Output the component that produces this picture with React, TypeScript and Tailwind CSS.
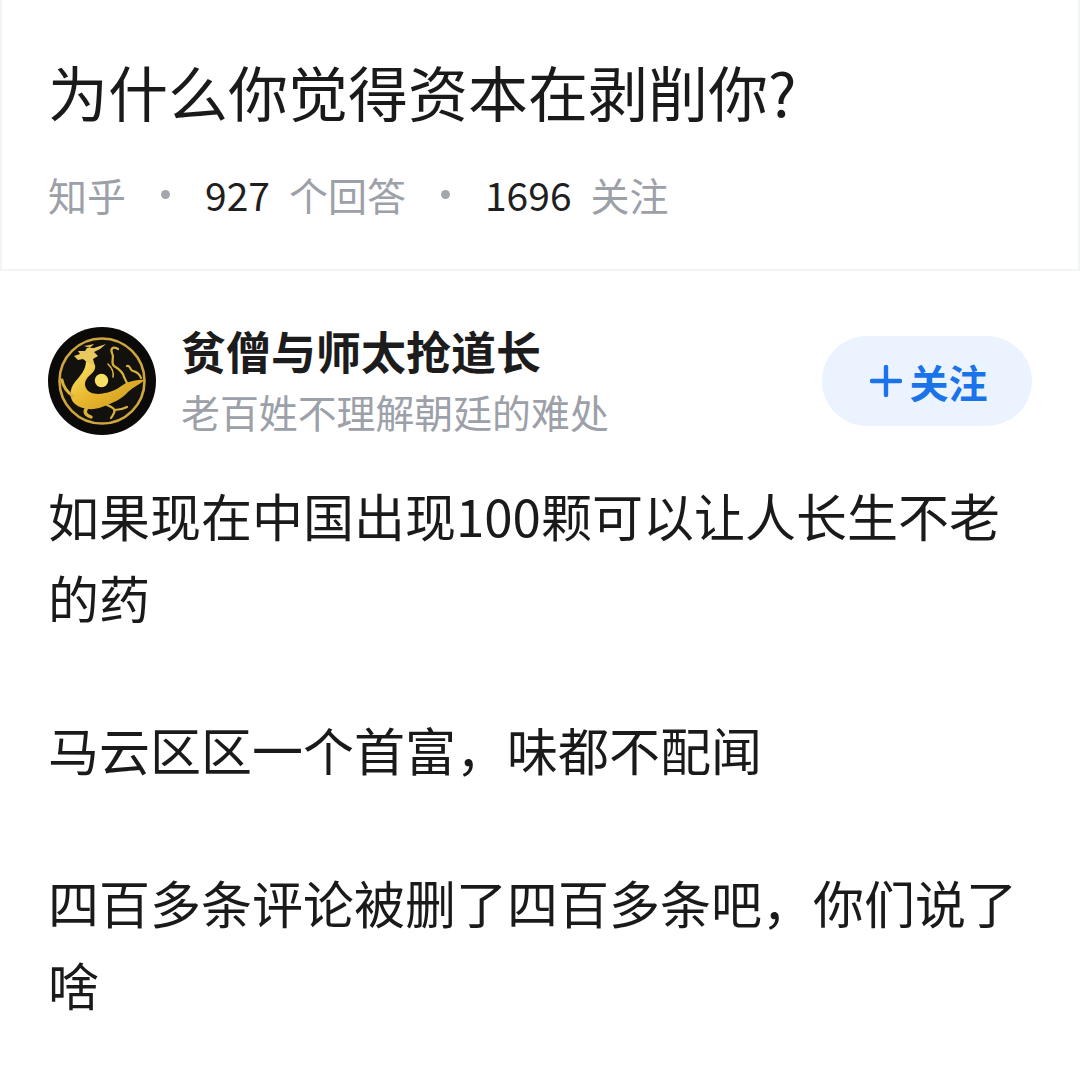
const cjk = { fontFamily: '"Noto Sans CJK SC", "Noto Sans", sans-serif' }

function DragonAvatar() {
  return (
    <svg viewBox="0 0 108 108" className="h-[108px] w-[108px] shrink-0">
      <defs>
        <linearGradient id="gold" x1="0" y1="0" x2="1" y2="1">
          <stop offset="0" stopColor="#fbe46a" />
          <stop offset="0.5" stopColor="#e8b62c" />
          <stop offset="1" stopColor="#c4931f" />
        </linearGradient>
      </defs>
      <circle cx="54" cy="54" r="54" fill="#0b0a09" />
      <circle cx="54" cy="54" r="42.5" fill="#12110e" stroke="#cfa53e" strokeWidth="2.6" />
      {/* body */}
      <path
        d="M38 34 L47 38 C48 42 45 46 41 49 C37 53 36 57 38 61 C41 67 49 68 57 66 C65 65 72 60 78 56 C84 54 92 52 97 53 C91 58 85 60 80 65 C74 72 65 76 54 80 C44 84 33 82 27 77 C21 72 21 62 27 55 C32 49 38 43 38 34 Z"
        fill="url(#gold)"
      />
      <circle cx="53.5" cy="53.5" r="6.7" fill="#f7e064" />
      {/* head and horns */}
      <path
        d="M26 29 L32 27 L30 24 L37 24 L39 21 L46 21 L58 17 L52 22 L46 25 L50 29 L45 32 L47 39 L40 36 L35 32 L30 33 Z"
        fill="#e8c95f"
      />
      <path d="M36 19 L46 17 L42 21 Z" fill="#d8b84e" />
      {/* whiskers and limbs */}
      <g fill="none" stroke="#d9b23c" strokeLinecap="round" strokeLinejoin="round">
        <path d="M70 22 C66 19 62 21 64 26 C67 31 62 35 66 39 C71 42 75 45 76 50 C77 52 78 54 79 56" strokeWidth="2.2" />
        <path d="M79 39 C83 38 81 43 85 44 C89 45 92 48 93 51" strokeWidth="2.2" />
        <path d="M60 37 C64 41 66 45 65 50" strokeWidth="1.6" />
        <path d="M14 53 C15 59 19 65 25 69" strokeWidth="3" />
        <path d="M40 80 C35 84 37 88 43 90" strokeWidth="3.4" />
        <path d="M59 78 C64 80 68 82 66 86 C65 88 64 90 63 91 M67 83 C71 83 75 82 79 80" strokeWidth="2.2" />
      </g>
    </svg>
  )
}

export default function App() {
  return (
    <div className="h-[1089px] w-[1080px] overflow-hidden bg-white" style={cjk}>
      <header className="h-[271px] border-x-2 border-b-2 border-x-gray-100 border-b-gray-100 pl-[46px]">
        <h1 className="pt-[47px] text-[60px] leading-[87px] text-[#1a1a1a]">
          为什么你觉得资本在剥削你?
        </h1>
        <div className="mt-[32px] flex h-[56px] items-center text-[39px] text-[#9ca0a8]">
          <span>知乎</span>
          <span className="mx-[35px] h-[9px] w-[9px] rounded-full bg-[#a3a6ad]" />
          <span className="text-[#1f1f1f]">927</span>
          <span className="ml-[19px]">个回答</span>
          <span className="mx-[35px] h-[9px] w-[9px] rounded-full bg-[#a3a6ad]" />
          <span className="text-[#1f1f1f]">1696</span>
          <span className="ml-[19px]">关注</span>
        </div>
      </header>

      <main className="px-[48px]">
        <div className="mt-[50px] flex items-center">
          <DragonAvatar />
          <div className="ml-[25px] flex-1">
            <div className="text-[45px] leading-[60px] font-bold text-[#1c1c1c]">贫僧与师太抢道长</div>
            <div className="text-[38.9px] leading-[60px] text-[#9ca0a8]">老百姓不理解朝廷的难处</div>
          </div>
          <button className="flex h-[90px] w-[210px] items-center justify-center rounded-full bg-[#ebf3fe] pl-[4px] text-[39px] font-bold text-[#1a73e8]">
            <svg viewBox="0 0 32 32" className="mr-[7px] h-[32px] w-[32px]">
              <path d="M16 2v28M2 16h28" stroke="#1a73e8" strokeWidth="4.4" strokeLinecap="round" />
            </svg>
            关注
          </button>
        </div>

        <article className="mt-[33px] text-[51px] leading-[82px] text-[#1a1a1a]">
          <p>如果现在中国出现100颗可以让人长生不老的药</p>
          <p className="mt-[70px]">马云区区一个首富{'\uFF0C'}味都不配闻</p>
          <p className="mt-[71px]">四百多条评论被删了四百多条吧{'\uFF0C'}你们说了啥</p>
        </article>
      </main>
    </div>
  )
}
